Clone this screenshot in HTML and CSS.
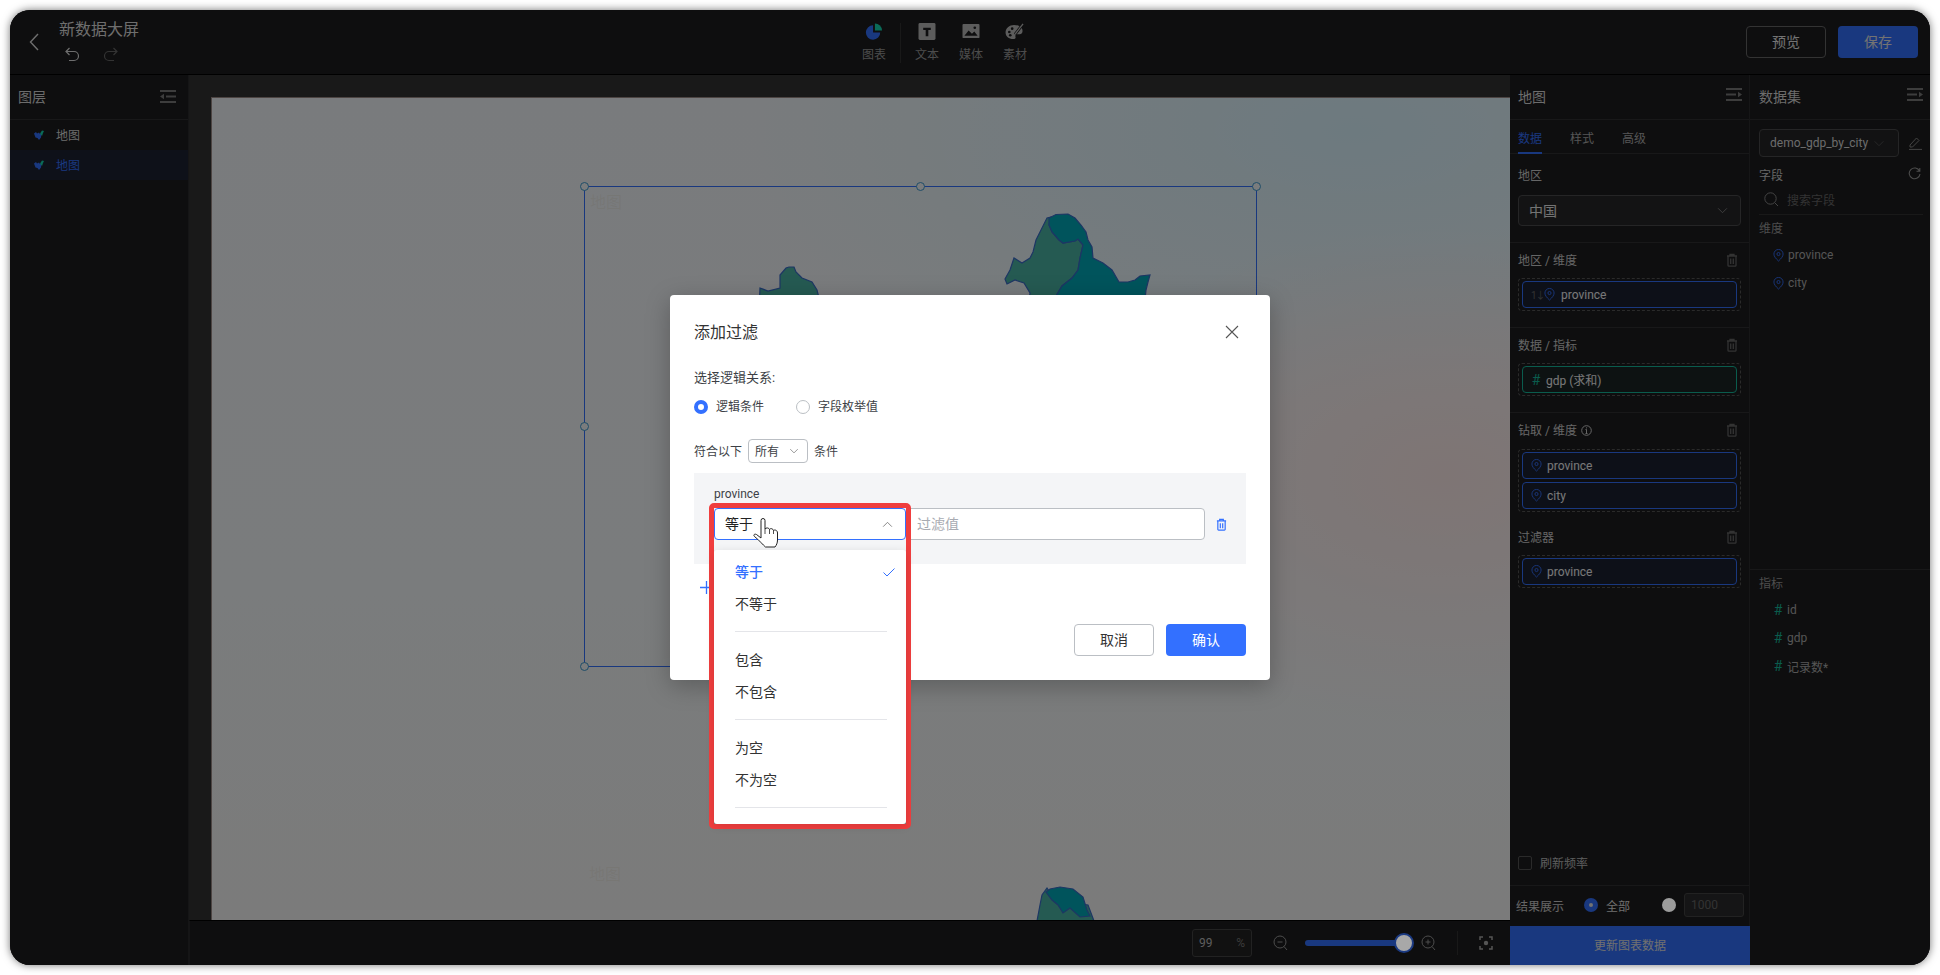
FILE: index.html
```html
<!DOCTYPE html>
<html lang="zh-CN">
<head>
<meta charset="utf-8">
<title>新数据大屏</title>
<link rel="stylesheet" href="styles.css">
</head>
<body>
<svg class="defs" width="0" height="0" aria-hidden="true">
  <symbol id="i-pin" viewBox="0 0 12 14"><path d="M6 13C3 10.2 1 8 1 5.4A5 5 0 0 1 11 5.4C11 8 9 10.2 6 13Z" fill="none" stroke="currentColor"/><circle cx="6" cy="5.4" r="1.7" fill="none" stroke="currentColor"/></symbol>
  <symbol id="i-trash" viewBox="0 0 12 14"><path d="M1 3H11M4 3V1.5H8V3M2 3V12.5A.8.8 0 0 0 2.8 13.2H9.2A.8.8 0 0 0 10 12.5V3M4.7 5.5V11M7.3 5.5V11" fill="none" stroke="currentColor" stroke-width="1.3"/></symbol>
  <symbol id="i-menu-l" viewBox="0 0 16 13"><path d="M0 1H16M6 6.5H16M0 12H16" stroke="currentColor" stroke-width="2" fill="none"/><path d="M0 6.5L4 3.8V9.2Z" fill="currentColor"/></symbol>
  <symbol id="i-menu-r" viewBox="0 0 16 13"><path d="M0 1H16M0 6.5H10M0 12H16" stroke="currentColor" stroke-width="2" fill="none"/><path d="M16 6.5L12 3.8V9.2Z" fill="currentColor"/></symbol>
  <symbol id="i-down" viewBox="0 0 12 8"><path d="M1 1.5L6 6.5L11 1.5" fill="none" stroke="currentColor"/></symbol>
  <symbol id="i-up" viewBox="0 0 12 8"><path d="M1 6.5L6 1.5L11 6.5" fill="none" stroke="currentColor"/></symbol>
  <symbol id="i-layer" viewBox="0 0 10 10"><path d="M0 3.500L2 2L3 3.500L5 2.500L6 4L7.500 3.500L7 7.500L5 10L3.500 8L1.500 7.500Z" fill="#3370ff"/><path d="M6 3.500L8 .5L10 1L9 3L8 6Z" fill="#14d6b0"/></symbol>
</svg>
<div class="window">
  <header class="topbar">
    <div class="brand">
      <svg class="back" width="10" height="18" viewBox="0 0 10 18"><path d="M9 1L1.5 9L9 17" fill="none" stroke="currentColor" stroke-width="1.4"/></svg>
      <div class="brand-text">
        <div class="doc-title">新数据大屏</div>
        <div class="history">
          <svg class="undo" width="15" height="15" viewBox="0 0 15 15"><path d="M4.5 1L1 4.5L4.5 8M1 4.5H9A4.5 4.5 0 0 1 9 13.5H4" fill="none" stroke="currentColor" stroke-width="1.2"/></svg>
          <svg class="redo" width="15" height="15" viewBox="0 0 15 15"><path d="M10.5 1L14 4.5L10.5 8M14 4.5H6A4.5 4.5 0 0 0 6 13.5H11" fill="none" stroke="currentColor" stroke-width="1.2"/></svg>
        </div>
      </div>
    </div>
    <nav class="tools">
      <div class="tool">
        <svg width="18" height="18" viewBox="0 0 18 18"><path d="M8 2.5A7.6 7.6 0 1 0 15.6 10H8Z" fill="#3370ff"/><path d="M10 .5A7.6 7.6 0 0 1 17.5 8H10Z" fill="#14d6b0"/></svg>
        <span>图表</span>
      </div>
      <div class="tool-sep"></div>
      <div class="tool">
        <svg width="18" height="18" viewBox="0 0 18 18"><rect width="18" height="18" rx="1.5" fill="#b8b8b8"/><path d="M5 5H13V7.4H10.4V14H7.6V7.4H5Z" fill="#1c1c1e"/></svg>
        <span>文本</span>
      </div>
      <div class="tool">
        <svg width="18" height="18" viewBox="0 0 18 18"><rect y="1" width="18" height="15" rx="1" fill="#b8b8b8"/><path d="M2 13.5L6.5 8L10 11.5L12.5 9L16 13.5Z" fill="#1c1c1e"/><circle cx="13" cy="5" r="1.4" fill="#1c1c1e"/></svg>
        <span>媒体</span>
      </div>
      <div class="tool">
        <svg width="20" height="18" viewBox="0 0 20 18"><path d="M9 2C4 2 0 5.500 0 10C0 14 3.500 17 8 17C10 17 11 16 10.500 14.500C10 13 11 12 12.500 12H15C17 12 18 10.500 18 8.500C18 4.500 14 2 9 2Z" fill="#b8b8b8"/><circle cx="4" cy="9.500" r="1.400" fill="#1c1c1e"/><circle cx="5" cy="13" r="1.400" fill="#1c1c1e"/><circle cx="7" cy="6" r="1.400" fill="#1c1c1e"/><path d="M10 12L18.500 1" stroke="#1c1c1e" stroke-width="3"/><path d="M10 12L18.500 1" stroke="#b8b8b8" stroke-width="1.400"/></svg>
        <span>素材</span>
      </div>
    </nav>
    <div class="actions">
      <button class="btn-ghost">预览</button>
      <button class="btn-primary">保存</button>
    </div>
  </header>

  <div class="workspace">
    <aside class="layers">
      <div class="panel-head"><span>图层</span><svg class="menu" width="16" height="13"><use href="#i-menu-l"/></svg></div>
      <div class="layer">
        <svg width="10" height="10"><use href="#i-layer"/></svg>
        <span>地图</span>
      </div>
      <div class="layer layer-active">
        <svg width="10" height="10"><use href="#i-layer"/></svg>
        <span>地图</span>
      </div>
    </aside>

    <main class="center">
      <div class="gutter">
        <div class="canvas">
          <svg class="map" width="1299" height="823" viewBox="211 97 1299 823">
            <path class="land-a" d="M1043 226L1047 218L1051 217L1049 225L1052 232L1059 240L1063 243L1075 241L1078 239L1083 245L1080 258L1078 270L1072 278L1062 286L1056 296L1060 310H1028L1030 293L1024 283L1015 280L1007 284L1005 279L1010 270L1014 258L1022 263L1030 258L1033 252L1036 240Z"/>
            <path class="land-b" d="M1049 218L1056 214.500L1068 214L1075 218L1081 225L1086 232L1088 240L1092 247L1093 258L1103 263L1112 270L1119 282L1128 282L1135 280L1140 276L1150 275L1148 282L1146 290L1144 310H1060L1056 296L1062 286L1072 278L1078 270L1080 258L1083 245L1078 239L1075 241L1063 243L1059 240L1052 232L1049 225Z"/>
            <path class="land-a" d="M759 310L760 288L768 291L780 288L780 275L786 268L789 267L794 267L796 272L802 278L812 282L817 290L822 310Z"/>
            <path class="land-a" d="M1037 921L1040 905L1042 895L1047 888L1055 900L1088 905L1094 921Z"/>
            <path class="land-b" d="M1046 892L1050 889L1060 887L1073 889L1083 897L1087 910L1090 916L1080 917L1070 908L1063 913L1058 905L1052 900Z"/>
          </svg>
          <div class="sel-box">
            <i class="handle h-tl"></i><i class="handle h-tm"></i><i class="handle h-tr"></i><i class="handle h-ml"></i><i class="handle h-bl"></i>
            <span class="ghost-label">地图</span>
          </div>
          <span class="ghost-label ghost-lower">地图</span>
        </div>
      </div>
      <div class="statusbar">
        <div class="zoom-input"><span>99</span><span class="zoom-unit">%</span></div>
        <svg class="zoom-minus" width="15" height="16" viewBox="0 0 15 16"><circle cx="7" cy="7" r="6" fill="none" stroke="currentColor"/><path d="M4.500 7H9.500M11 11.500L14 15" fill="none" stroke="currentColor"/></svg>
        <div class="slider"><div class="slider-track"></div><div class="slider-knob"></div></div>
        <svg class="zoom-plus" width="15" height="16" viewBox="0 0 15 16"><circle cx="7" cy="7" r="6" fill="none" stroke="currentColor"/><path d="M4.500 7H9.500M7 4.500V9.500M11 11.500L14 15" fill="none" stroke="currentColor"/></svg>
        <div class="status-sep"></div>
        <svg class="focus" width="14" height="14" viewBox="0 0 14 14"><path d="M1 4V1H4M10 1H13V4M13 10V13H10M4 13H1V10" fill="none" stroke="currentColor" stroke-width="1.500"/><circle cx="7" cy="7" r="2.200" fill="currentColor"/></svg>
      </div>
    </main>

    <section class="props">
      <div class="panel-head panel-head-r"><span>地图</span><svg class="menu" width="16" height="13"><use href="#i-menu-r"/></svg></div>
      <div class="tabs">
        <span class="tab tab-active">数据</span><span class="tab">样式</span><span class="tab">高级</span>
      </div>
      <div class="sec sec-region">
        <div class="sec-label"><span>地区</span></div>
        <div class="select-dark"><span>中国</span><svg width="11" height="7"><use href="#i-down"/></svg></div>
      </div>
      <div class="sec">
        <div class="sec-label"><span>地区 / 维度</span><svg class="bin" width="12" height="14"><use href="#i-trash"/></svg></div>
        <div class="drop">
          <div class="pill pill-blue pill-sort">
            <span class="sort">1↓</span><svg class="pin" width="11" height="13"><use href="#i-pin"/></svg><span>province</span>
          </div>
        </div>
      </div>
      <div class="sec">
        <div class="sec-label"><span>数据 / 指标</span><svg class="bin" width="12" height="14"><use href="#i-trash"/></svg></div>
        <div class="drop">
          <div class="pill pill-green"><span class="hash">#</span><span>gdp (求和)</span></div>
        </div>
      </div>
      <div class="sec sec-open">
        <div class="sec-label"><span>钻取 / 维度 <svg class="info" width="11" height="11" viewBox="0 0 11 11"><circle cx="5.500" cy="5.500" r="4.800" fill="none" stroke="currentColor"/><path d="M5.500 4.500V8.500M4.500 4.500H5.500M4.500 8.500H6.500M5.500 2.400V3.400" fill="none" stroke="currentColor"/></svg></span><svg class="bin" width="12" height="14"><use href="#i-trash"/></svg></div>
        <div class="drop">
          <div class="pill pill-blue"><svg class="pin" width="11" height="13"><use href="#i-pin"/></svg><span>province</span></div>
          <div class="pill pill-blue"><svg class="pin" width="11" height="13"><use href="#i-pin"/></svg><span>city</span></div>
        </div>
        <div class="sec-label sec-label-next"><span>过滤器</span><svg class="bin" width="12" height="14"><use href="#i-trash"/></svg></div>
        <div class="drop">
          <div class="pill pill-blue"><svg class="pin" width="11" height="13"><use href="#i-pin"/></svg><span>province</span></div>
        </div>
      </div>
      <div class="refresh"><i class="check"></i><span>刷新频率</span></div>
      <div class="result">
        <span class="result-label">结果展示</span>
        <i class="dark-radio"></i><span class="result-all">全部</span>
        <i class="gray-radio"></i>
        <div class="limit">1000</div>
      </div>
      <button class="update">更新图表数据</button>
    </section>

    <section class="dataset">
      <div class="panel-head panel-head-r"><span>数据集</span><svg class="menu" width="16" height="13"><use href="#i-menu-r"/></svg></div>
      <div class="ds-select-row">
        <div class="ds-select"><span>demo_gdp_by_city</span><svg width="12" height="7"><use href="#i-down"/></svg></div>
        <svg class="edit" width="14" height="14" viewBox="0 0 14 14"><path d="M2 9L8.500 2L11 4.500L4.500 11H2ZM1 13.400H14" fill="none" stroke="currentColor"/></svg>
      </div>
      <div class="ds-fields"><span>字段</span>
        <svg width="13" height="13" viewBox="0 0 13 13"><path d="M11.500 4A5.400 5.400 0 1 0 12 7M11.800 1V4.300H8.500" fill="none" stroke="currentColor" stroke-width="1.100"/></svg>
      </div>
      <div class="ds-search">
        <svg width="15" height="15" viewBox="0 0 15 15"><circle cx="6.500" cy="6.500" r="5.700" fill="none" stroke="currentColor"/><path d="M10.800 10.800L14 14" stroke="currentColor"/></svg>
        <span>搜索字段</span>
      </div>
      <div class="ds-dims">
        <div class="ds-group">维度</div>
        <div class="ds-item"><svg class="pin" width="11" height="13"><use href="#i-pin"/></svg><span>province</span></div>
        <div class="ds-item"><svg class="pin" width="11" height="13"><use href="#i-pin"/></svg><span>city</span></div>
      </div>
      <div class="ds-measures">
        <div class="ds-group">指标</div>
        <div class="ds-item"><span class="hash">#</span><span>id</span></div>
        <div class="ds-item"><span class="hash">#</span><span>gdp</span></div>
        <div class="ds-item"><span class="hash">#</span><span>记录数*</span></div>
      </div>
    </section>
  </div>

  <div class="mask"></div>

  <div class="modal">
    <div class="modal-head">
      <span>添加过滤</span>
      <svg width="14" height="14" viewBox="0 0 14 14"><path d="M1 1L13 13M13 1L1 13" fill="none" stroke="currentColor" stroke-width="1.100"/></svg>
    </div>
    <div class="m-label">选择逻辑关系:</div>
    <div class="m-radios">
      <label class="m-radio"><i class="dot dot-on"></i>逻辑条件</label>
      <label class="m-radio"><i class="dot"></i>字段枚举值</label>
    </div>
    <div class="m-match">
      <span>符合以下</span>
      <div class="mini-select"><span>所有</span><svg width="10" height="6"><use href="#i-down"/></svg></div>
      <span>条件</span>
    </div>
    <div class="rule">
      <div class="rule-field">province</div>
      <div class="rule-row">
        <div class="op-select"><span>等于</span><svg width="11" height="7"><use href="#i-up"/></svg></div>
        <div class="value-input">过滤值</div>
        <svg class="rule-del" width="11" height="13"><use href="#i-trash"/></svg>
      </div>
    </div>
    <div class="add-row"><svg width="13" height="13" viewBox="0 0 13 13"><path d="M6.500 0V13M0 6.500H13" stroke="currentColor" stroke-width="1.300"/></svg><span>添加条件</span></div>
    <div class="modal-foot">
      <button class="m-cancel">取消</button>
      <button class="m-ok">确认</button>
    </div>
  </div>

  <div class="callout">
    <div class="menu-pop">
      <div class="opt opt-on"><span>等于</span><svg width="12" height="9" viewBox="0 0 12 9"><path d="M.5 4.500L4 8L11.500 .5" fill="none" stroke="currentColor"/></svg></div>
      <div class="opt">不等于</div>
      <hr class="opt-sep">
      <div class="opt">包含</div>
      <div class="opt">不包含</div>
      <hr class="opt-sep">
      <div class="opt">为空</div>
      <div class="opt">不为空</div>
      <hr class="opt-sep">
    </div>
  </div>

  <svg class="cursor" width="26" height="32" viewBox="0 0 26 32"><path d="M8 21V3.500a2 2 0 0 1 4 0V12c1-1.500 4-1.500 4.500.5C17.500 11 20 11.500 20.500 13.500 21.500 12.500 24.500 13 24.500 16V23c0 3-1 5-2.500 7H12.500C10 28 6 23 1.500 19.500 0 18 1.500 16.500 3.500 17.500Z" fill="#fff" stroke="#222" stroke-width="1"/><path d="M12 12V17M16.500 12.500V17M20.500 13.500V17" fill="none" stroke="#222" stroke-width=".8"/></svg>
</div>
</body>
</html>
```

FILE: styles.css
```css
* { box-sizing: border-box; }
html, body { margin: 0; height: 100%; overflow: hidden; background: #fff; }
body {
  padding: 10px;
  font-family: Roboto, "Noto Sans CJK SC", sans-serif;
  font-size: 12px;
  color: #e6e6e6;
}
i { display: block; font-style: normal; }
button { font: inherit; cursor: pointer; }
.defs { position: absolute; }

.window {
  position: relative;
  width: 1920px;
  height: 955px;
  border-radius: 20px;
  overflow: hidden;
  display: flex;
  flex-direction: column;
  background: #1c1c1e;
  box-shadow: 0 0 9px rgba(0, 0, 0, .55);
}
.mask { position: absolute; inset: 0; background: rgba(0, 0, 0, .5); z-index: 10; }

/* top bar */
.topbar {
  height: 65px;
  flex: none;
  display: flex;
  align-items: stretch;
  background: #1c1c1e;
  border-bottom: 1px solid #000;
}
.brand { width: 842px; flex: none; display: flex; padding-left: 19px; }
.back { margin-top: 23px; color: #ddd; flex: none; }
.brand-text { margin-left: 20px; padding-top: 8px; }
.doc-title { font-size: 16px; line-height: 24px; color: #ddd; }
.history { display: flex; gap: 23px; margin-top: 5px; padding-left: 6px; }
.undo { color: #ddd; }
.redo { color: #666; }
.tools { display: flex; align-items: flex-start; padding-top: 13px; }
.tool { width: 44px; display: flex; flex-direction: column; align-items: center; gap: 7px; color: #999; height: 40px; }
.tool span { line-height: 16px; }
.tool-sep { width: 1px; height: 40px; margin: 0 4px; background: #333; }
.actions { margin-left: auto; display: flex; gap: 12px; padding: 16px 12px 0 0; }
.btn-ghost, .btn-primary { width: 80px; height: 32px; border-radius: 4px; font-size: 14px; padding: 0 0 2px; }
.btn-ghost { background: transparent; border: 1px solid #666; color: #e6e6e6; }
.btn-primary { background: #3370ff; border: 0; color: #e6e6e6; }

.workspace { flex: 1; min-height: 0; display: flex; }

/* panels */
.panel-head {
  height: 45px;
  flex: none;
  display: flex;
  justify-content: space-between;
  align-items: center;
  padding: 0 12px 0 8px;
  border-bottom: 1px solid #303033;
  font-size: 14px;
  color: #d8d8d8;
}
.panel-head span { padding-bottom: 2px; }
.panel-head .menu { color: #7a7a7a; margin-top: -2px; }
.panel-head-r { padding-right: 7px; }
.panel-head-r .menu { margin-top: -6px; }
.dataset .panel-head { padding-left: 9px; }

.layers { width: 179px; flex: none; border-right: 1px solid #2a2a2c; background: #1c1c1e; }
.layer { height: 30px; display: flex; align-items: center; padding: 0 0 2px 24px; gap: 12px; color: #d8d8d8; }
.layer svg { margin-top: 2px; }
.layer-active { background: #1c2233; color: #3370ff; }

.center { flex: 1; min-width: 0; display: flex; flex-direction: column; }
.gutter { flex: 1; min-height: 0; background: #333; padding: 22px 0 0 22px; }
.canvas {
  position: relative;
  height: 100%;
  overflow: hidden;
  border-top: 1px solid #9a8a86;
  border-left: 1px solid #9a8a86;
  background:
    radial-gradient(ellipse 400px 250px at 95% 46%, rgba(255, 232, 230, .85), rgba(255, 232, 230, 0) 100%),
    radial-gradient(ellipse 620px 280px at 88% 4%, rgba(216, 244, 255, .9), rgba(216, 244, 255, 0) 100%),
    linear-gradient(180deg, #f3f7fa, #f5f8fa 60%, #f6f7f6);
}
.map { position: absolute; left: -1px; top: -1px; }
.land-a { fill: #4ab4a4; stroke: #3a6cc8; stroke-width: 1.200; }
.land-b { fill: #00a8b8; stroke: #3a6cc8; stroke-width: 1.200; }
.sel-box {
  position: absolute;
  left: 372px;
  top: 88px;
  width: 673px;
  height: 481px;
  border: 1px solid #3370ff;
}
.handle {
  position: absolute;
  width: 9px;
  height: 9px;
  border-radius: 50%;
  border: 1px solid #3d9ad0;
  background: #f4f8fb;
}
.h-tl { left: -5px; top: -5px; }
.h-tm { left: 331px; top: -5px; }
.h-tr { right: -5px; top: -5px; }
.h-ml { left: -5px; top: 235px; }
.h-bl { left: -5px; bottom: -5px; }
.ghost-label {
  position: absolute;
  left: 5px;
  top: 6px;
  font-size: 16px;
  line-height: 20px;
  color: rgba(210, 190, 160, .16);
}
.ghost-lower { left: 377px; top: 767px; }

.statusbar {
  height: 45px;
  flex: none;
  display: flex;
  align-items: center;
  justify-content: flex-end;
  padding-right: 17px;
  background: #1c1c1e;
  border-top: 1px solid #000;
  border-left: 1px solid #2a2a2c;
  color: #999;
}
.zoom-input {
  width: 60px;
  height: 28px;
  border: 1px solid #444;
  border-radius: 3px;
  background: #222;
  display: flex;
  justify-content: space-between;
  align-items: center;
  padding: 0 6px;
  color: #bbb;
}
.zoom-unit { color: #777; }
.zoom-minus { margin-left: 21px; }
.slider { position: relative; width: 109px; height: 18px; margin-left: 17px; }
.slider-track { position: absolute; left: 0; top: 6px; width: 100px; height: 6px; border-radius: 3px; background: #3370ff; }
.slider-knob {
  position: absolute;
  right: 0;
  top: -1px;
  width: 20px;
  height: 20px;
  border-radius: 50%;
  background: #a8a8a8;
  border: 2px solid #1b3a82;
  z-index: 11;
}
.zoom-plus { margin-left: 7px; }
.status-sep { width: 1px; height: 24px; margin: 0 21px; background: #333; }
.focus { color: #aaa; }

/* props */
.props {
  width: 240px;
  flex: none;
  display: flex;
  flex-direction: column;
  border-right: 1px solid #2c2c2e;
  background: #1c1c1e;
  position: relative;
}
.tabs {
  height: 34px;
  flex: none;
  display: flex;
  gap: 28px;
  padding-left: 8px;
  border-bottom: 1px solid #303033;
  color: #aaa;
}
.tab { line-height: 38px; height: 34px; width: 24px; white-space: nowrap; }
.tab-active { color: #3370ff; border-bottom: 2px solid #3370ff; }
.sec { height: 85px; flex: none; padding: 8px 8px 0; border-bottom: 1px solid #303033; }
.sec-region { height: 89px; }
.sec-open { height: auto; flex: 1; border-bottom: 0; }
.sec-label {
  height: 18px;
  line-height: 18px;
  display: flex;
  justify-content: space-between;
  align-items: center;
  color: #ccc;
}
.sec-label > span { padding-top: 2px; }
.sec-label-next { margin-top: 16px; }
.sec-region .sec-label { margin-top: 4px; }
.bin { color: #666; margin-right: 3px; }
.info { vertical-align: -1px; margin-left: 1px; }
.select-dark {
  height: 31px;
  margin-top: 11px;
  border: 1px solid #4a4a4c;
  border-radius: 4px;
  background: #262628;
  display: flex;
  justify-content: space-between;
  align-items: center;
  padding: 0 12px 2px 10px;
  font-size: 14px;
  color: #e6e6e6;
}
.select-dark svg { color: #888; margin-top: 2px; }
.drop {
  margin-top: 9px;
  padding: 2px 3px;
  border: 1px dashed #555;
  border-radius: 4px;
  display: flex;
  flex-direction: column;
  gap: 3px;
}
.sec-open > .drop:nth-child(2) { margin-top: 10px; }
.pill {
  height: 27px;
  border-radius: 4px;
  display: flex;
  align-items: center;
  padding-left: 8px;
  gap: 5px;
  color: #f0f0f0;
}
.pill-blue { border: 1px solid #3370ff; background: #1a2030; }
.pill-green { border: 1px solid #14b89a; background: #1a2424; }
.pin { color: #3370ff; flex: none; }
.pill-sort .pin { margin-right: 1px; }
.hash { color: #14b89a; font-size: 14px; width: 10px; text-align: center; }
.sort { color: #666; font-size: 10px; width: 10px; margin-right: -2px; white-space: nowrap; letter-spacing: -1px; }
.refresh { height: 46px; flex: none; display: flex; align-items: center; gap: 8px; padding-left: 8px; border-bottom: 1px solid #303033; color: #bbb; }
.check { width: 14px; height: 14px; border: 1px solid #555; border-radius: 2px; }
.result { height: 40px; flex: none; display: flex; align-items: center; padding: 0 0 2px 6px; color: #ccc; }
.result-label { width: 68px; }
.dark-radio { width: 14px; height: 14px; border-radius: 50%; background: #3370ff; position: relative; }
.dark-radio::after { content: ""; position: absolute; left: 5px; top: 5px; width: 4px; height: 4px; border-radius: 50%; background: #e6e6e6; }
.result-all { margin-left: 8px; width: 56px; color: #ddd; }
.gray-radio { width: 14px; height: 14px; border-radius: 50%; background: #9c9c9c; z-index: 11; position: relative; }
.limit { width: 60px; height: 24px; margin-left: 8px; border: 1px solid #444; border-radius: 3px; background: #2a2a2c; padding-left: 6px; line-height: 22px; color: #666; }
.update { height: 39px; flex: none; width: calc(100% + 1px); background: #3370ff; border: 0; color: #e0e0e0; padding: 0 0 2px; }

/* dataset */
.dataset { width: 180px; flex: none; display: flex; flex-direction: column; background: #1c1c1e; }
.ds-select-row { display: flex; align-items: center; padding: 9px 0 0 9px; flex: none; }
.ds-select {
  width: 140px;
  height: 28px;
  border: 1px solid #4a4a4c;
  border-radius: 4px;
  background: #242426;
  display: flex;
  align-items: center;
  justify-content: space-between;
  padding: 0 13px 0 10px;
  color: #d8d8d8;
  white-space: nowrap;
}
.ds-select svg { color: #555; flex: none; }
.edit { margin-left: 9px; color: #888; }
.ds-fields { display: flex; justify-content: space-between; align-items: center; padding: 8px 9px 2px 9px; height: 28px; color: #ccc; flex: none; }
.ds-fields svg { color: #999; margin-top: -2px; }
.ds-search {
  height: 30px;
  margin: 0 7px 0 9px;
  display: flex;
  align-items: center;
  gap: 8px;
  padding: 0 0 0 5px;
  border-bottom: 1px solid #333;
  color: #666;
  flex: none;
}
.ds-search svg { color: #888; flex: none; }
.ds-dims { height: 355px; flex: none; border-bottom: 1px solid #303033; padding-top: 5px; }
.ds-group { height: 18px; line-height: 18px; padding-left: 9px; color: #999; margin-bottom: 3px; }
.ds-item { height: 28px; display: flex; align-items: center; gap: 4px; padding-left: 23px; color: #aaa; }
.ds-measures { padding-top: 5px; }

/* modal */
.modal {
  position: absolute;
  left: 660px;
  top: 285px;
  width: 600px;
  height: 385px;
  background: #fff;
  border-radius: 4px;
  padding: 25px 24px 0;
  box-shadow: 0 6px 24px rgba(0, 0, 0, .25);
  color: #3d3f46;
  z-index: 12;
}
.modal-head { height: 24px; display: flex; justify-content: space-between; align-items: center; font-size: 16px; color: #333; }
.modal-head span { padding-bottom: 2px; }
.modal-head svg { color: #555; margin-right: 7px; }
.m-label { margin-top: 24px; height: 20px; line-height: 20px; font-size: 13px; }
.m-radios { margin-top: 9px; height: 20px; display: flex; gap: 27px; }
.m-radio { display: flex; align-items: center; gap: 8px; width: 75px; white-space: nowrap; line-height: 18px; padding-bottom: 1px; }
.dot { width: 14px; height: 14px; border-radius: 50%; border: 1px solid #bbbfc4; flex: none; margin-top: 1px; }
.dot-on { border: 4px solid #3370ff; background: #fff; }
.m-match { margin-top: 22px; height: 24px; display: flex; align-items: center; gap: 6px; }
.m-match > span { padding-bottom: 2px; }
.mini-select {
  width: 60px;
  height: 24px;
  border: 1px solid #bbbfc4;
  border-radius: 4px;
  display: flex;
  align-items: center;
  justify-content: space-between;
  padding: 0 8px 2px 6px;
}
.mini-select svg { color: #777; margin-top: 2px; }
.rule { margin-top: 10px; height: 91px; padding: 12px 18px 0 20px; background: #f4f5f7; }
.rule-field { height: 18px; line-height: 18px; }
.rule-row { margin-top: 5px; display: flex; align-items: center; }
.op-select {
  width: 192px;
  height: 32px;
  flex: none;
  border: 1px solid #3370ff;
  border-radius: 4px;
  background: #fff;
  display: flex;
  align-items: center;
  justify-content: space-between;
  padding: 0 12px 2px 10px;
  font-size: 14px;
  color: #222;
}
.op-select svg { color: #777; margin-top: 2px; }
.value-input {
  width: 299px;
  height: 32px;
  flex: none;
  border: 1px solid #bbbfc4;
  border-radius: 0 4px 4px 0;
  background: #fff;
  line-height: 30px;
  padding-left: 10px;
  font-size: 14px;
  color: #a8abb2;
}
.rule-del { color: #3370ff; margin-left: 11px; flex: none; }
.add-row { margin-top: 13px; height: 20px; display: flex; align-items: center; gap: 4px; padding-left: 6px; color: #3370ff; font-size: 14px; }
.modal-foot { margin-top: 27px; display: flex; justify-content: flex-end; gap: 12px; }
.m-cancel, .m-ok { width: 80px; height: 32px; border-radius: 4px; font-size: 14px; padding: 0 0 2px; }
.m-cancel { border: 1px solid #bbbfc4; background: #fff; color: #333; }
.m-ok { border: 0; background: #3370ff; color: #fff; }

/* callout with open dropdown */
.callout {
  position: absolute;
  left: 699px;
  top: 493px;
  width: 202px;
  height: 326px;
  border: 5px solid #f03e3e;
  border-radius: 5px;
  padding-top: 42px;
  display: flex;
  z-index: 13;
}
.menu-pop {
  flex: 1;
  background: #fff;
  border-radius: 3px;
  padding-top: 6px;
  box-shadow: 0 2px 10px rgba(0, 0, 0, .12);
}
.opt { height: 32px; display: flex; align-items: center; justify-content: space-between; padding: 0 11px 2px 21px; font-size: 14px; color: #333; }
.opt svg { margin-top: 2px; }
.opt-on { color: #3370ff; font-weight: 500; }
.opt-sep { margin: 11px 19px 12px 21px; border: 0; height: 1px; background: #e4e5e9; }
.cursor { position: absolute; left: 743px; top: 507px; z-index: 14; }
```
